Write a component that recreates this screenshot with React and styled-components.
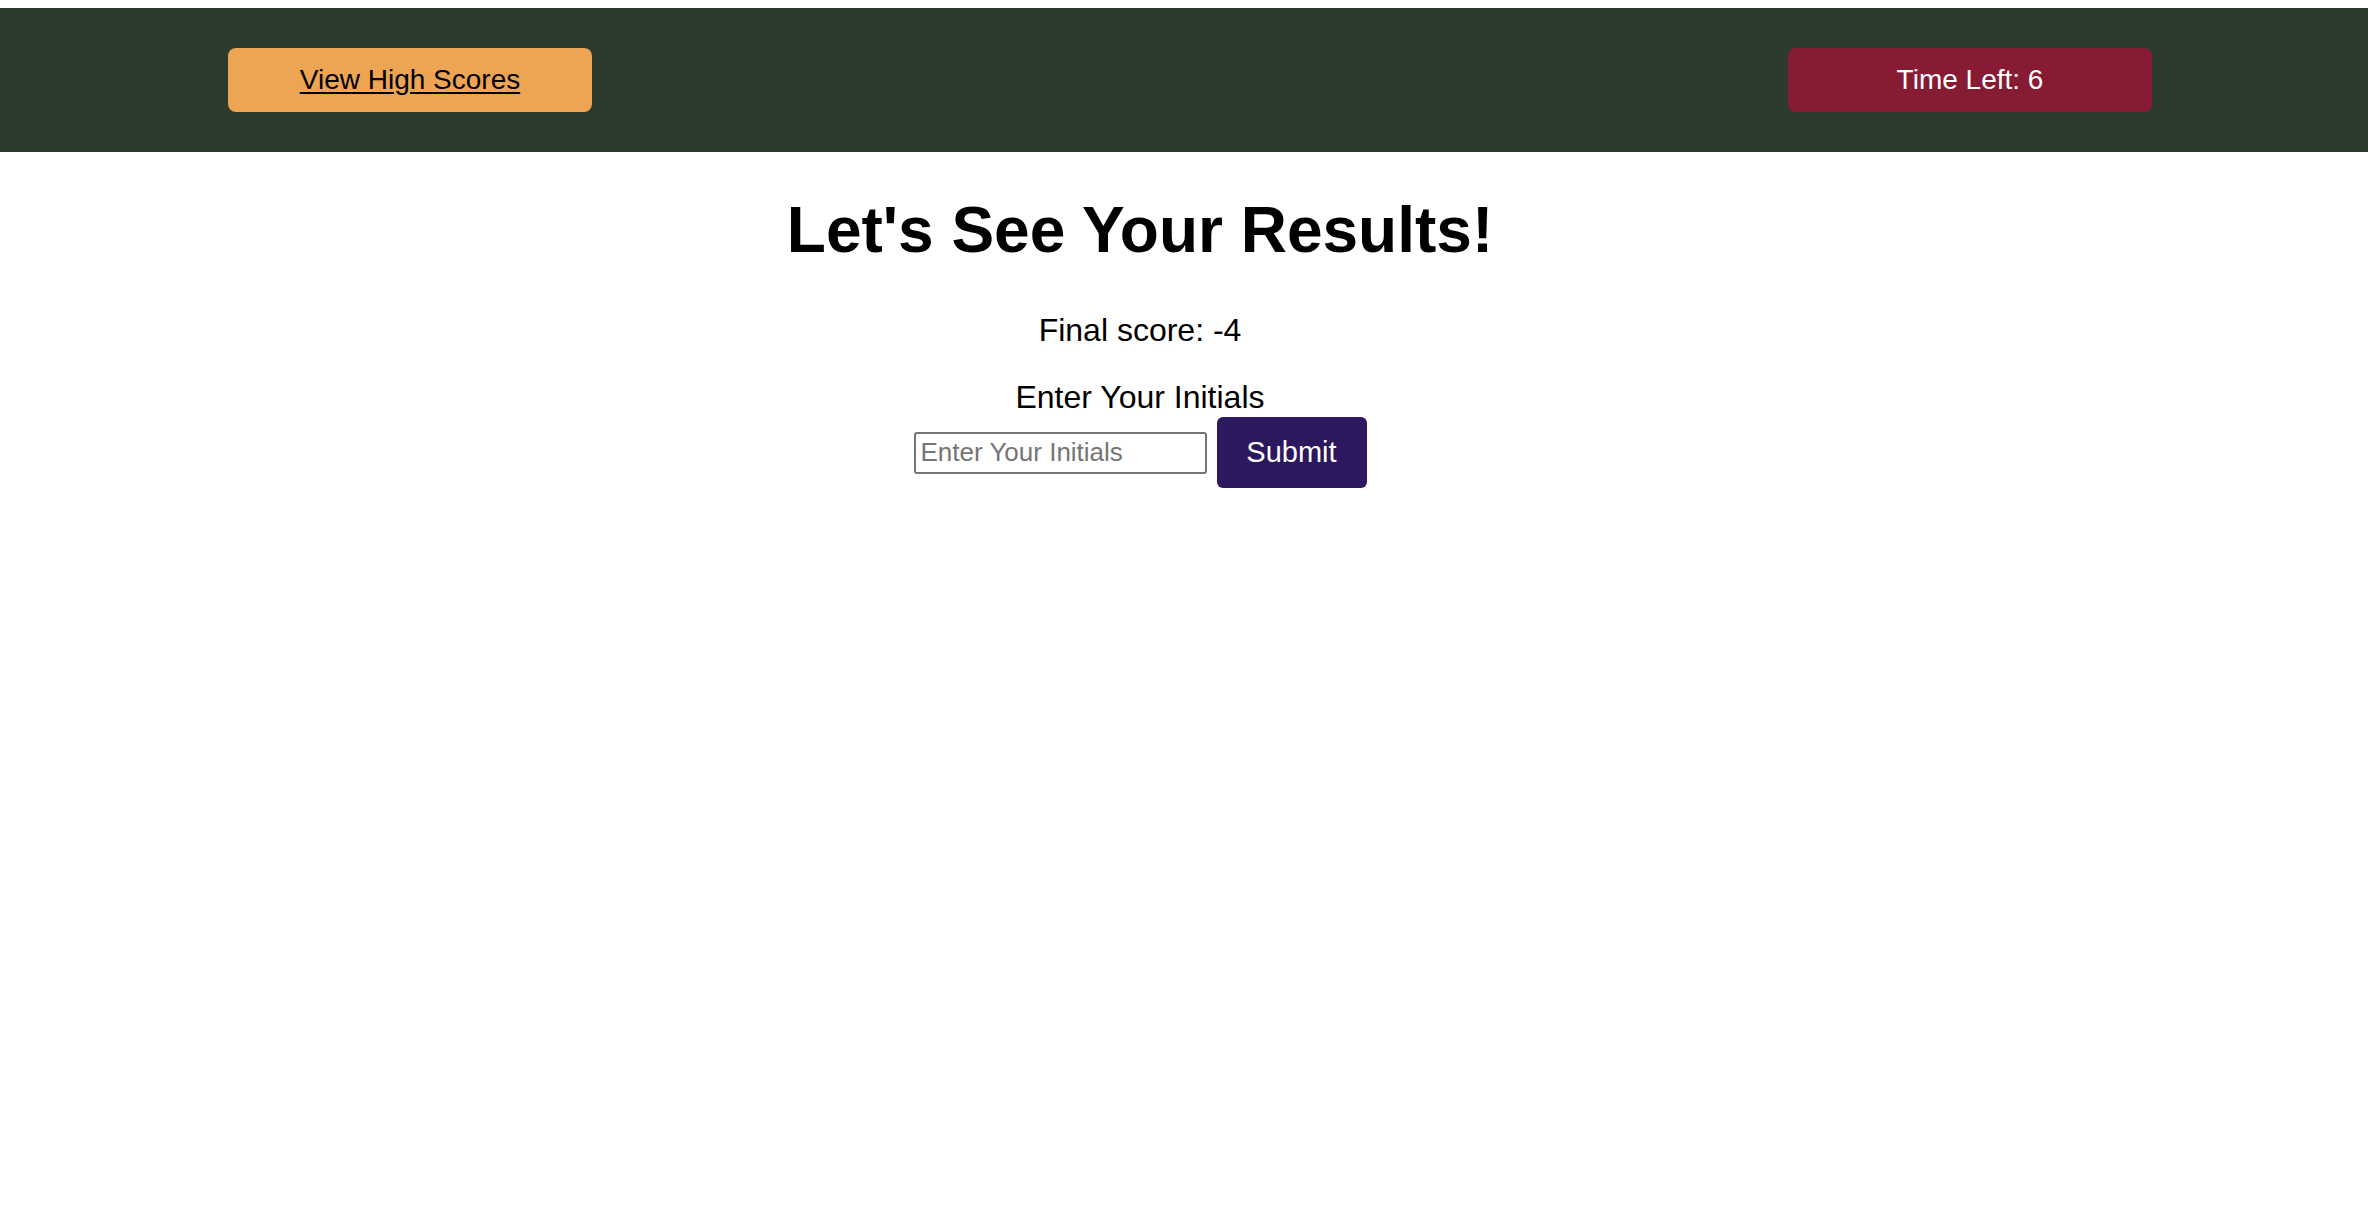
import React from "react";
import styled, { createGlobalStyle } from "styled-components";

const Global = createGlobalStyle`
  html, body { margin: 0; padding: 0; background: #ffffff; }
  body { font-family: "Liberation Sans", Arial, sans-serif; color: #000; }
`;

const Page = styled.div`
  padding-top: 8px;
`;

const Header = styled.header`
  background: #2d3b2e;
  height: 144px;
  display: flex;
  align-items: center;
  justify-content: space-between;
  padding: 0 216px 0 228px;
  box-sizing: border-box;
`;

const HeaderButton = styled.div`
  width: 364px;
  height: 64px;
  border-radius: 8px;
  display: flex;
  align-items: center;
  justify-content: center;
  font-size: 28px;
  background: ${(p) => p.$bg};
  color: ${(p) => p.$fg};
  text-decoration: ${(p) => (p.$link ? "underline" : "none")};
  text-underline-offset: 3px;
  cursor: ${(p) => (p.$link ? "pointer" : "default")};
`;

const Main = styled.main`
  display: flex;
  flex-direction: column;
  align-items: center;
  padding-right: 88px;
  padding-top: 42px;
`;

const Title = styled.h1`
  margin: 0;
  font-size: 64px;
  font-weight: bold;
  line-height: 1.15;
`;

const Score = styled.p`
  margin: 44px 0 0;
  font-size: 32px;
  line-height: 1.15;
`;

const Label = styled.label`
  margin-top: 31px;
  font-size: 32px;
  line-height: 1.15;
`;

const Form = styled.form`
  display: flex;
  align-items: center;
  gap: 10px;
  margin-top: 1px;
`;

const Input = styled.input`
  width: 293px;
  height: 42px;
  box-sizing: border-box;
  border: 2px solid #767676;
  border-radius: 3px;
  padding: 0 5px;
  font-family: "Liberation Sans", Arial, sans-serif;
  font-size: 26px;
  &::placeholder { color: #757575; }
`;

const Submit = styled.button`
  width: 150px;
  height: 71px;
  border: none;
  border-radius: 6px;
  background: #2b185e;
  color: #fff;
  font-family: "Liberation Sans", Arial, sans-serif;
  font-size: 29px;
  cursor: pointer;
`;

export default function App() {
  return (
    <Page>
      <Global />
      <Header>
        <HeaderButton $bg="#eda453" $fg="#000" $link>View High Scores</HeaderButton>
        <HeaderButton $bg="#871b33" $fg="#fff">Time Left: 6</HeaderButton>
      </Header>
      <Main>
        <Title>Let's See Your Results!</Title>
        <Score>Final score: -4</Score>
        <Label htmlFor="initials">Enter Your Initials</Label>
        <Form onSubmit={(e) => e.preventDefault()}>
          <Input id="initials" placeholder="Enter Your Initials" />
          <Submit type="submit">Submit</Submit>
        </Form>
      </Main>
    </Page>
  );
}
